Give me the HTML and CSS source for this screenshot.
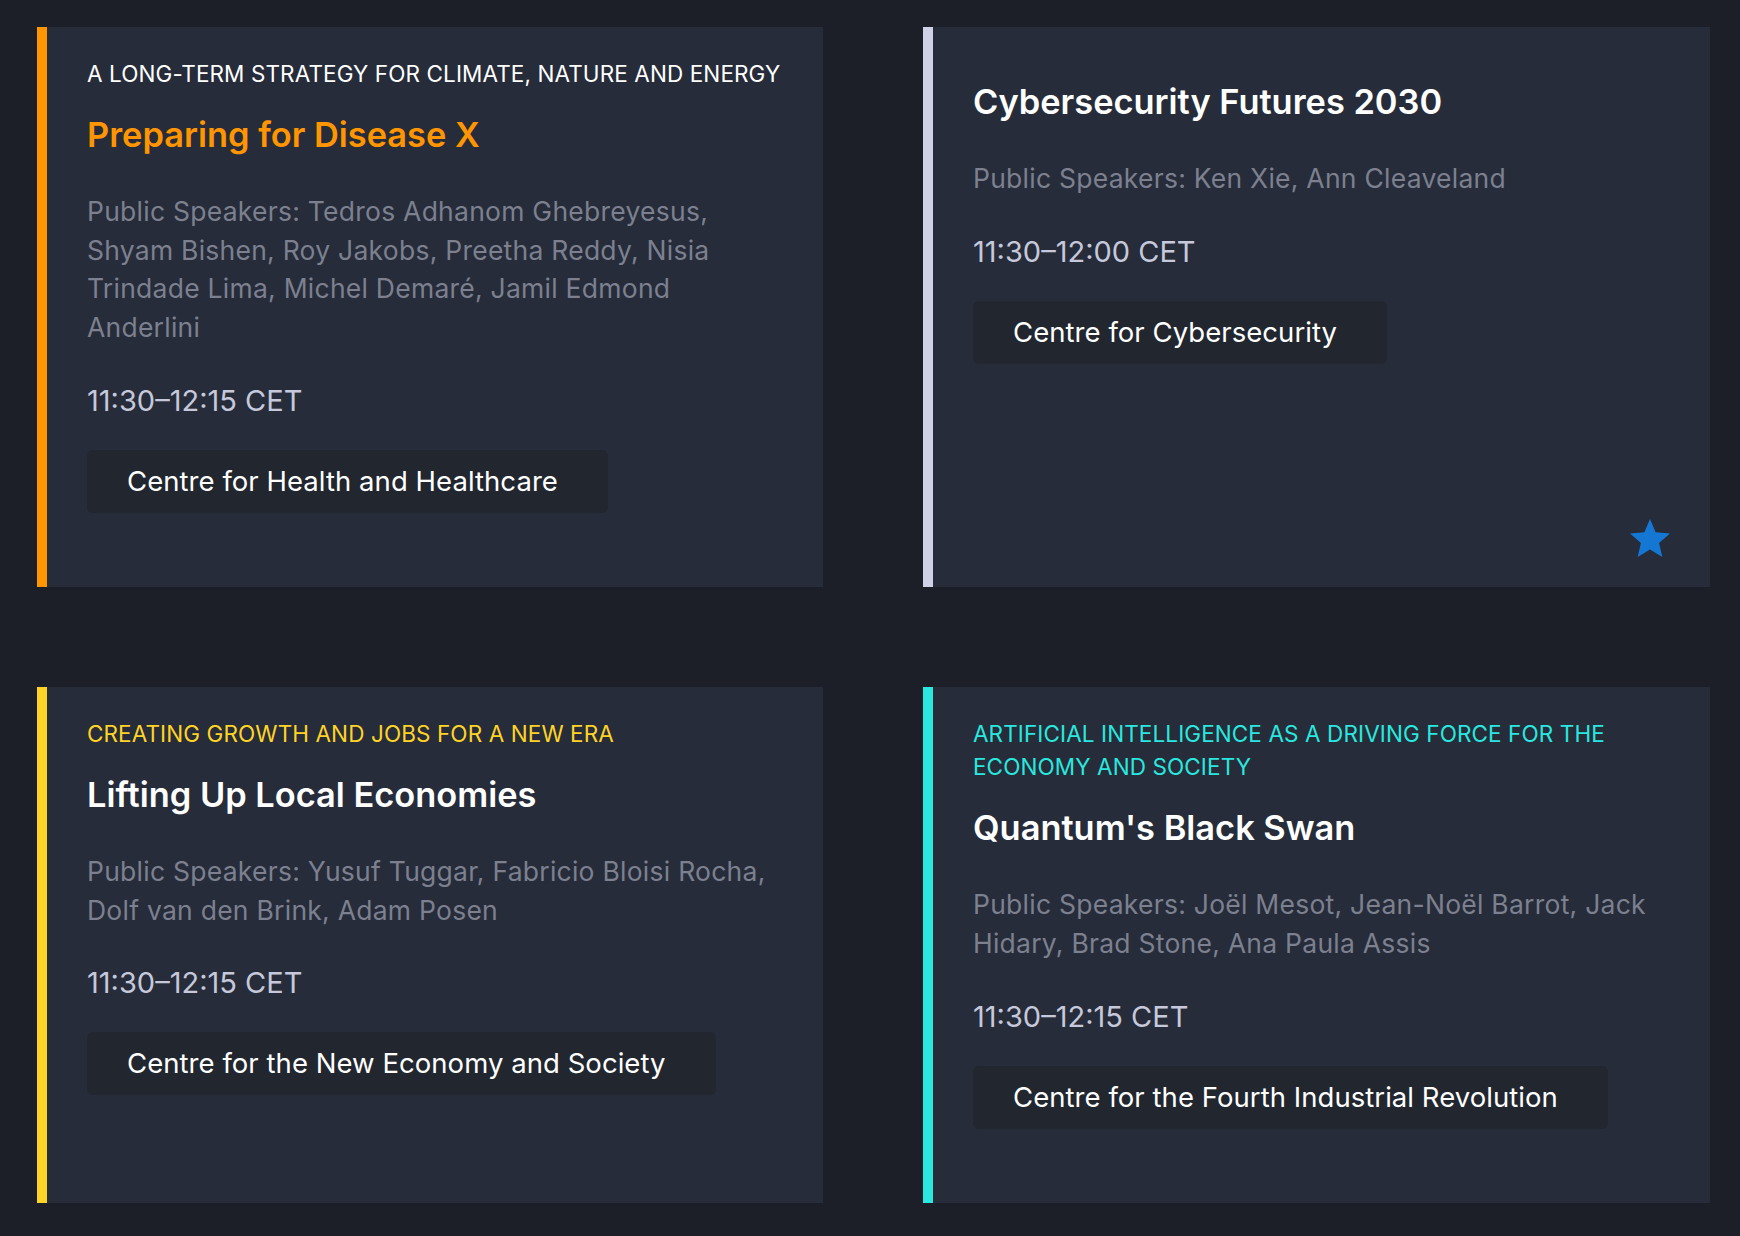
FILE: index.html
```html
<!DOCTYPE html>
<html lang="en">
<head>
<meta charset="utf-8">
<title>Sessions</title>
<link rel="stylesheet" href="styles.css">
</head>
<body>
<main class="grid">
  <article class="card card--orange">
    <p class="tag tag--white">A LONG-TERM STRATEGY FOR CLIMATE, NATURE AND ENERGY</p>
    <h2 class="title title--orange">Preparing for Disease X</h2>
    <p class="speakers">Public Speakers: Tedros Adhanom Ghebreyesus, Shyam Bishen, Roy Jakobs, Preetha Reddy, Nisia Trindade Lima, Michel Demaré, Jamil Edmond Anderlini</p>
    <p class="time">11:30–12:15 CET</p>
    <div class="pill-row"><span class="pill">Centre for Health and Healthcare</span></div>
    <div class="footer"></div>
  </article>

  <article class="card card--lavender">
    <p class="tag"></p>
    <h2 class="title">Cybersecurity Futures 2030</h2>
    <p class="speakers">Public Speakers: Ken Xie, Ann Cleaveland</p>
    <p class="time">11:30–12:00 CET</p>
    <div class="pill-row"><span class="pill">Centre for Cybersecurity</span></div>
    <div class="footer">
      <svg class="star" width="40" height="38" viewBox="2 2 20 19" aria-label="Saved"><path d="M12 17.27L18.18 21l-1.64-7.03L22 9.24l-7.19-.61L12 2 9.19 8.63 2 9.24l5.46 4.73L5.82 21z"/></svg>
    </div>
  </article>

  <article class="card card--yellow">
    <p class="tag tag--yellow">CREATING GROWTH AND JOBS FOR A NEW ERA</p>
    <h2 class="title">Lifting Up Local Economies</h2>
    <p class="speakers">Public Speakers: Yusuf Tuggar, Fabricio Bloisi Rocha, Dolf van den Brink, Adam Posen</p>
    <p class="time">11:30–12:15 CET</p>
    <div class="pill-row"><span class="pill">Centre for the New Economy and Society</span></div>
    <div class="footer"></div>
  </article>

  <article class="card card--cyan">
    <p class="tag tag--cyan">ARTIFICIAL INTELLIGENCE AS A DRIVING FORCE FOR THE ECONOMY AND SOCIETY</p>
    <h2 class="title">Quantum's Black Swan</h2>
    <p class="speakers">Public Speakers: Joël Mesot, Jean-Noël Barrot, Jack Hidary, Brad Stone, Ana Paula Assis</p>
    <p class="time">11:30–12:15 CET</p>
    <div class="pill-row"><span class="pill">Centre for the Fourth Industrial Revolution</span></div>
    <div class="footer"></div>
  </article>
</main>
</body>
</html>
```

FILE: styles.css
```css
html, body {
  margin: 0;
  padding: 0;
}

body {
  background: #1c1f28;
  font-family: Inter, "Noto Sans", "Liberation Sans", sans-serif;
  color: #ffffff;
}

.grid {
  display: grid;
  grid-template-columns: 786px 787px;
  column-gap: 100px;
  row-gap: 100px;
  padding: 27px 30px 33px 37px;
}

.card {
  display: flex;
  flex-direction: column;
  background: #262c3a;
  border-left: 10px solid #ff9500;
  padding: 30px 38px 30px 40px;
}

.card--orange { border-left-color: #ff9500; }
.card--lavender { border-left-color: #cfd2e6; }
.card--yellow { border-left-color: #ffd426; }
.card--cyan { border-left-color: #2ae8df; }

.tag {
  margin: 0 0 22px;
  font-size: 22.5px;
  line-height: 33.2px;
  letter-spacing: 0.1px;
  font-weight: 400;
  color: #ffffff;
}

.tag--white { color: #ffffff; }
.tag--yellow { color: #ffd426; }
.tag--cyan { color: #2ae8df; }

.title {
  margin: 0 0 34px;
  font-size: 34.4px;
  line-height: 46px;
  font-weight: 600;
  color: #ffffff;
}

.title--orange { color: #ff9500; }

.speakers {
  margin: 0 0 33px;
  font-size: 26.5px;
  line-height: 38.6px;
  letter-spacing: 0.25px;
  font-weight: 400;
  color: #7c808f;
}

.time {
  margin: 0 0 28px;
  font-size: 29px;
  line-height: 42px;
  font-weight: 400;
  color: #c6c9db;
}

.pill-row {
  display: flex;
}

.pill {
  background: #21262f;
  border-radius: 6px;
  padding: 15px 50px 15px 40px;
  font-size: 27.5px;
  line-height: 33px;
  letter-spacing: 0.05px;
  color: #ffffff;
}

.footer {
  margin-top: auto;
  height: 44.4px;
  display: flex;
  justify-content: flex-end;
  align-items: flex-end;
}

.star {
  display: block;
  fill: #1577d4;
  margin-right: 2px;
}
```
